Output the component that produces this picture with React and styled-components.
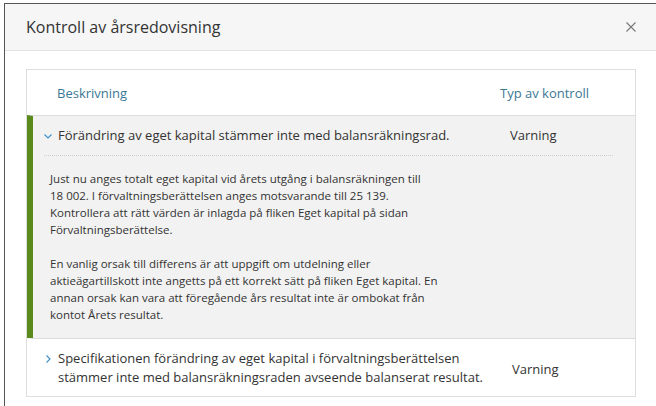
import React from 'react';
import styled, { createGlobalStyle } from 'styled-components';

const GlobalStyle = createGlobalStyle`
  html, body {
    margin: 0;
    padding: 0;
    background: #ffffff;
  }
  body {
    font-family: "Open Sans", "Noto Sans", sans-serif;
    color: #333;
  }
`;

const Page = styled.div`
  padding: 3px 0 0 4px;
  height: 406px;
  box-sizing: border-box;
  overflow: hidden;
`;

const Dialog = styled.div`
  border-top: 1px solid #555;
  border-left: 1px solid #555;
  background: #fff;
  height: 100%;
`;

const DialogHeader = styled.div`
  display: flex;
  align-items: center;
  justify-content: space-between;
  height: 46px;
  padding: 0 20px 0 21px;
  background: #f6f6f6;
  border-bottom: 1px solid #e3e3e3;
`;

const DialogTitle = styled.h2`
  margin: 0;
  font-size: 16px;
  font-weight: 400;
  color: #333;
`;

const CloseButton = styled.button`
  border: 0;
  background: none;
  padding: 0;
  width: 10px;
  height: 10px;
  display: flex;
  cursor: pointer;
`;

const DialogBody = styled.div`
  padding: 18px 20px 0 21px;
`;

const Card = styled.div`
  border: 1px solid #dedede;
`;

const HeadRow = styled.div`
  display: grid;
  grid-template-columns: 1fr 135px;
  align-items: center;
  height: 45px;
  padding-left: 30px;
  font-size: 13px;
  color: #3b7896;
`;

const Row = styled.div`
  border-top: 1px solid #dcdcdc;
  background: ${p => (p.open ? '#f2f2f2' : '#fff')};
  border-left: 6px solid ${p => (p.open ? '#5a8a1c' : 'transparent')};
  padding: 0 22px 0 11px;
`;

const RowHead = styled.div`
  display: grid;
  grid-template-columns: 14px 1fr 103px;
  align-items: ${p => (p.open ? 'center' : 'start')};
  min-height: ${p => (p.open ? '40px' : '57px')};
  padding-top: ${p => (p.open ? '0' : '10px')};
  box-sizing: border-box;
  font-size: 13px;
  line-height: 19px;
  color: #333;
  border-bottom: ${p => (p.open ? '1px dotted #cfcfcf' : '0')};
`;

const Chevron = styled.span`
  display: flex;
  margin-top: ${p => (p.open ? '0' : '6px')};
`;

const RowType = styled.span`
  align-self: center;
  padding-left: ${p => (p.open ? '0' : '2px')};
  margin-top: ${p => (p.open ? '0' : '-6px')};
`;

const Details = styled.div`
  padding: 14px 0 15px 6px;
  font-size: 11.5px;
  line-height: 17px;
  color: #333;
  max-width: 392px;

  p {
    margin: 0 0 17px;
  }
  p:last-child {
    margin: 0;
  }
`;

const ChevronIcon = ({ open }) => (
  <svg width="8" height="8" viewBox="0 0 8 8">
    {open ? (
      <path d="M0.5 2.5 L4 6 L7.5 2.5" fill="none" stroke="#3b8fc7" strokeWidth="1.1" />
    ) : (
      <path d="M2.5 0.5 L6 4 L2.5 7.5" fill="none" stroke="#3b8fc7" strokeWidth="1.1" />
    )}
  </svg>
);

const rows = [
  {
    title: 'Förändring av eget kapital stämmer inte med balansräkningsrad.',
    type: 'Varning',
    open: true,
    details: [
      'Just nu anges totalt eget kapital vid årets utgång i balansräkningen till 18\u00a0002. I förvaltningsberättelsen anges motsvarande till 25\u00a0139. Kontrollera att rätt värden är inlagda på fliken Eget kapital på sidan Förvaltningsberättelse.',
      'En vanlig orsak till differens är att uppgift om utdelning eller aktieägartillskott inte angetts på ett korrekt sätt på fliken Eget kapital. En annan orsak kan vara att föregående års resultat inte är ombokat från kontot Årets resultat.',
    ],
  },
  {
    title: 'Specifikationen förändring av eget kapital i förvaltningsberättelsen stämmer inte med balansräkningsraden avseende balanserat resultat.',
    type: 'Varning',
    open: false,
  },
];

export default function App() {
  return (
    <>
      <GlobalStyle />
      <Page>
        <Dialog>
          <DialogHeader>
            <DialogTitle>Kontroll av årsredovisning</DialogTitle>
            <CloseButton aria-label="Stäng">
              <svg width="10" height="10" viewBox="0 0 10 10">
                <path d="M0.5 0.5 L9.5 9.5 M9.5 0.5 L0.5 9.5" stroke="#777" strokeWidth="1.1" />
              </svg>
            </CloseButton>
          </DialogHeader>
          <DialogBody>
            <Card>
              <HeadRow>
                <span>Beskrivning</span>
                <span>Typ av kontroll</span>
              </HeadRow>
              {rows.map(row => (
                <Row key={row.title} open={row.open}>
                  <RowHead open={row.open}>
                    <Chevron open={row.open}>
                      <ChevronIcon open={row.open} />
                    </Chevron>
                    <span>{row.title}</span>
                    <RowType open={row.open}>{row.type}</RowType>
                  </RowHead>
                  {row.open && (
                    <Details>
                      {row.details.map(d => (
                        <p key={d}>{d}</p>
                      ))}
                    </Details>
                  )}
                </Row>
              ))}
            </Card>
          </DialogBody>
        </Dialog>
      </Page>
    </>
  );
}
